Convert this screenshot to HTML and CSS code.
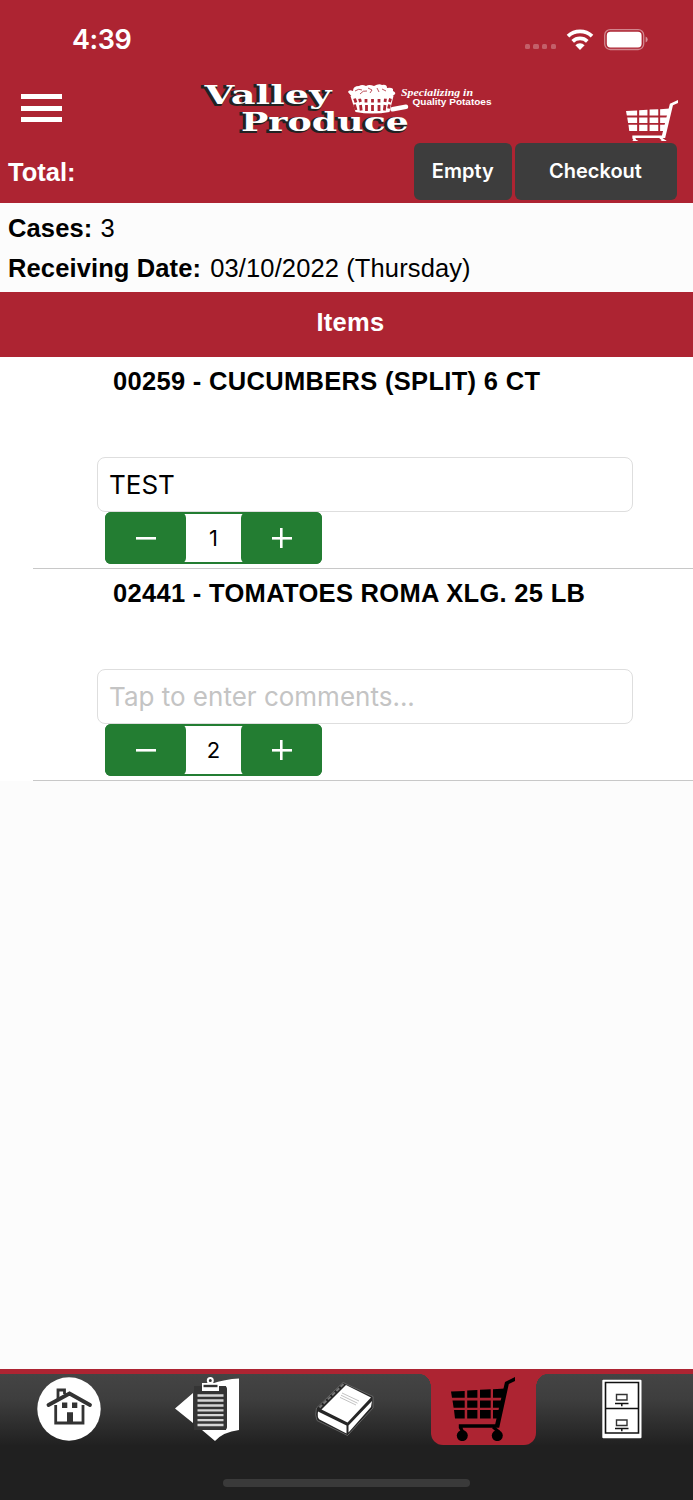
FILE: index.html
```html
<!DOCTYPE html>
<html lang="en">
<head>
  <meta charset="UTF-8" />
  <meta name="viewport" content="width=device-width, initial-scale=1.0"/>
  <title>Valley Produce - Cart</title>
  <link rel="stylesheet" href="styles.css">
</head>
<body>
  <!-- Shared cart icon -->
  <svg class="sprite" width="0" height="0">
    <symbol id="cart" viewBox="0 0 64 64" preserveAspectRatio="none">
      <path d="M0 14.6l13.7-.5v6.6H1zM16.2 13.6l10.2-.6v7.7H16.2zM29 12.8l10.7-.5v8.4H29zM42 12.2l12-.8-2 9.3H42z"/>
      <path d="M1.5 23.4h12.2v7.4H2.6zM16.2 23.4h10.2v7.4H16.2zM29 23.4h10.7v7.4H29zM42 23.4h10.5l-1.8 7.4H42z"/>
      <path d="M3 33h10.7v8.4H4zM16.2 33h10.2v8.4H16.2zM29 33h10.7v8.4H29zM42 33h9l-3 8.4H42z"/>
      <path d="M64 0v4l-6.2 3-9.6 43.8H11.500l2.200 5h-3.200L7.800 51v-3.800h36.400L54 5z"/>
      <path d="M42 50l6 5" stroke="currentColor" stroke-width="3"/>
      <circle cx="11.3" cy="58.6" r="5.5"/>
      <circle cx="46.3" cy="58.6" r="5.5"/>
    </symbol>
  </svg>

  <header class="header">
    <div class="status-bar">
      <span class="time">4:39</span>
      <div class="status-icons">
        <div class="signal"><i></i><i></i><i></i><i></i></div>
        <svg class="wifi" width="28" height="21" viewBox="0 0 28 21">
          <path d="M2 7.2a17.6 17.6 0 0 1 24 0M6.7 12.3a10.8 10.8 0 0 1 14.6 0" fill="none" stroke="#fff" stroke-width="3.8"/>
          <path d="M14 21l-4.6-4.8a6.6 6.6 0 0 1 9.2 0z" fill="#fff"/>
        </svg>
        <svg class="battery" width="44" height="22" viewBox="0 0 44 22">
          <rect x=".7" y=".7" width="39" height="19.8" rx="5.5" fill="none" stroke="#fff" stroke-opacity=".45" stroke-width="1.3"/>
          <rect x="2.8" y="2.8" width="34.8" height="15.6" rx="3.6" fill="#fff"/>
          <path d="M41.6 7.6q2.1 1 2.1 3t-2.1 3z" fill="#fff" fill-opacity=".5"/>
        </svg>
      </div>
    </div>

    <div class="top-bar">
      <button class="menu-btn" aria-label="Menu"><i></i><i></i><i></i></button>
      <svg class="logo" width="300" height="62" viewBox="195 78 300 62">
        <g class="logo-shadow">
          <text x="202.5" y="105" textLength="127" lengthAdjust="spacingAndGlyphs">Valley</text>
          <text x="239" y="132.2" textLength="168" lengthAdjust="spacingAndGlyphs">Produce</text>
        </g>
        <g class="logo-name">
          <text x="204.5" y="103.7" textLength="127" lengthAdjust="spacingAndGlyphs">Valley</text>
          <text x="241" y="131" textLength="168" lengthAdjust="spacingAndGlyphs">Produce</text>
        </g>
        <path d="M350.5 96h43l-4 16q-17 3-34 0z" fill="#fff"/>
        <path d="M354.5 98.5l1.5 4M359.5 98.5l1 3.5M366 99v3.5M372.5 99v3.5M379 99v3.5M385.5 98.5l-.5 3.5M390.5 98.5l-1 3.5M354.5 104.5l1.5 5.500M360.5 105l.7 5.5M366.5 105v6M372.5 105v6M379 105v6M385 105l-.7 5.5M389.5 104.5l-1 4" fill="none" stroke="#ad2432" stroke-width="2.8"/>
        <path d="M348 92q1-3 5-1 0-5 6-5 3-2 7 0 3-2 8 0 5-3 8-1 5-1 5 3 7-1 6 3 4 2 1 4l-4 3q-19 2-37 0z" fill="#fff"/>
        <path d="M355 91q4-3 7-1M360 94q3-4 7-3M368 88l4 2-2 3M377 88l2 4M382 89l4 2" fill="none" stroke="#ad2432" stroke-width=".8"/>
        <path d="M392.5 109.3l13.500-2.500" stroke="#fff" stroke-width="4.5" stroke-linecap="round"/>
        <text class="script" x="401" y="95.8" textLength="72" lengthAdjust="spacingAndGlyphs">Specializing in</text>
        <text class="tagline" x="412.5" y="105" textLength="79" lengthAdjust="spacingAndGlyphs">Quality Potatoes</text>
      </svg>
      <svg class="header-cart" width="52" height="41"><use href="#cart" width="52" height="48"/></svg>
    </div>

    <div class="total-bar">
      <span class="total">Total:</span>
      <button class="action-btn empty-btn">Empty</button>
      <button class="action-btn checkout-btn">Checkout</button>
    </div>
  </header>

  <section class="summary">
    <p><strong>Cases:</strong> <span class="cases">3</span></p>
    <p><strong>Receiving Date:</strong> <span class="date">03/10/2022 (Thursday)</span></p>
  </section>

  <h2 class="items-title">Items</h2>

  <main class="items">
    <div class="item">
      <h3>00259 - CUCUMBERS (SPLIT) 6 CT</h3>
      <input type="text" class="comment" value="TEST" placeholder="Tap to enter comments..." />
      <div class="stepper">
        <button aria-label="Decrease"><i class="minus"></i></button>
        <span>1</span>
        <button aria-label="Increase"><i class="plus"></i></button>
      </div>
    </div>
    <div class="item">
      <h3>02441 - TOMATOES ROMA XLG. 25 LB</h3>
      <input type="text" class="comment" placeholder="Tap to enter comments..." />
      <div class="stepper">
        <button aria-label="Decrease"><i class="minus"></i></button>
        <span>2</span>
        <button aria-label="Increase"><i class="plus"></i></button>
      </div>
    </div>
  </main>

  <nav class="tab-bar">
    <a class="tab">
      <svg width="64" height="64" viewBox="0 0 64 64">
        <circle cx="32" cy="32" r="31.7" fill="#fff"/>
        <path d="M21 22v-9h6.500v4M18.700 28v18h27.300V28" fill="none" stroke="#333" stroke-width="2.8"/>
        <path d="M11.500 28L32.500 16.500 53 28" fill="none" stroke="#333" stroke-width="3.8" stroke-linecap="round"/>
        <path d="M25 25.500h5.300v5.500H25zM35 25.500h5.300v5.500H35zM30 35.300h6v11h-6z" fill="#333"/>
      </svg>
    </a>
    <a class="tab">
      <svg width="64" height="64" viewBox="0 0 64 64">
        <path d="M0 31.5L18 16v30zM27 54h25q6-.5 12-1V1.500Q50 2 36 7l8 2h7v44H27l13 11q8-9 24-11" fill="#fff"/>
        <path d="M19 9h30q3 0 3 3v38q0 3-3 3H19z" fill="#353535"/>
        <path d="M27 6h17v8H27z" fill="#fff"/>
        <path d="M28.5 9h14" stroke="#333" stroke-width="2.4"/>
        <circle cx="35.3" cy="3.5" r="2.5" fill="#353535" stroke="#fff" stroke-width="2"/>
        <path d="M22.5 18.5h26M22.5 23.5h26M22.5 28.5h26M22.5 33.3h26M22.5 38.2h26M22.5 43.2h26M22.5 48h26" stroke="#d5d5d5" stroke-width="2.3"/>
      </svg>
    </a>
    <a class="tab">
      <svg width="64" height="64" viewBox="0 0 64 64">
        <path d="M30 5.5L3.5 31Q1.5 38 4 43.5L34.5 58.5 60 31V19.5z" fill="#262626" stroke="#777" stroke-width=".7"/>
        <path d="M33 8L8.5 32.5 34.5 45.5 58 20.5z" fill="#fff"/>
        <path d="M5 34.5L33.5 48.5v8L6.5 42.5q-2.500-2-1.500-8zM35.5 48.5L59 24l-1 6L35.5 55.5z" fill="#fff"/>
        <path d="M29 16l17 8M28 18.2l16.500 8M27 20.4l16 7.600" stroke="#bbb" stroke-width=".9"/>
        <path d="M30.5 7L6.5 30.5" stroke="#777" stroke-width="2" stroke-dasharray="4 2"/>
      </svg>
    </a>
    <a class="tab active">
      <svg width="64" height="64"><use href="#cart" width="64" height="64"/></svg>
    </a>
    <a class="tab">
      <svg class="cabinet" width="40" height="60" viewBox="0 0 40 60">
        <rect x=".3" y=".8" width="39.2" height="58.4" rx="1" fill="#fff"/>
        <path d="M3.5 3.5h33V54h-33zM3.5 29.500h33" fill="none" stroke="#111" stroke-width="1.6"/>
        <path d="M14.500 15.500h10.500v5.500H14.500zM14.500 41h10.500v5.500H14.500z" fill="none" stroke="#333" stroke-width="1.4"/>
        <path d="M13 24.500h13.500M19.800 24.500v2.800M13 49.500h13.500M19.800 49.500v2.800" stroke="#111" stroke-width="1.5"/>
      </svg>
    </a>
    <div class="home-indicator"></div>
  </nav>
</body>
</html>
```
FILE: styles.css
```css
* {
  box-sizing: border-box;
}

body {
  margin: 0;
  height: 1500px;
  display: flex;
  flex-direction: column;
  background: #fcfcfc;
  color: #000;
  font-family: "Liberation Sans", Arial, sans-serif;
  overflow: hidden;
}

button {
  border: none;
  padding: 0;
  font-family: Inter, sans-serif;
}

.sprite {
  position: absolute;
}

/* Header */
.header {
  height: 202.5px;
  flex-shrink: 0;
  background: #ad2432;
  color: #fff;
}

.status-bar {
  height: 78px;
  padding: 0 45px 0 72px;
  display: flex;
  justify-content: space-between;
}

.time {
  font: 600 27px/32px Inter, sans-serif;
  letter-spacing: -0.4px;
  margin-top: 24px;
}

.status-icons {
  display: flex;
  align-items: flex-start;
  padding-top: 29px;
}

.signal {
  display: flex;
  gap: 3.4px;
  margin: 15px 10px 0 0;
}

.signal i {
  width: 5.3px;
  height: 5.3px;
  border-radius: 1.5px;
  background: rgba(255, 255, 255, 0.27);
}

.battery {
  margin-left: 10px;
}

.top-bar {
  height: 64px;
  display: flex;
  padding-left: 21px;
}

.menu-btn {
  width: 41px;
  margin-top: 16px;
  background: none;
  display: flex;
  flex-direction: column;
  gap: 6.5px;
}

.menu-btn i {
  height: 5px;
  background: #fff;
}

.logo {
  margin-left: 133px;
}

.logo text {
  font-family: "DejaVu Serif", serif;
  font-weight: bold;
  font-size: 26px;
}

.logo-shadow {
  fill: #222;
  stroke: #222;
  stroke-width: 2px;
}

.logo-name {
  fill: #fff;
}

.logo .script {
  font: italic bold 10px "Liberation Serif", serif;
  fill: #fff;
}

.logo .tagline {
  font: bold 8.5px "Liberation Sans", sans-serif;
  fill: #fff;
}

.header-cart {
  margin: 22px 0 0 131px;
  fill: #fff;
  color: #fff;
}

.total-bar {
  height: 60.5px;
  display: flex;
  padding: 0 16.5px 0 8px;
}

.total {
  flex: 1;
  font-weight: bold;
  font-size: 25.5px;
  line-height: 61px;
}

.action-btn {
  height: 57px;
  margin-top: 0.5px;
  border-radius: 6px;
  background: #3d3d3d;
  color: #fff;
  font-weight: 600;
  font-size: 20px;
}

.empty-btn {
  width: 97.5px;
  margin-right: 3px;
}

.checkout-btn {
  width: 162px;
}

/* Order summary */
.summary {
  height: 89px;
  flex-shrink: 0;
  padding: 5px 8px;
  font-size: 25.5px;
}

.summary p {
  margin: 0;
  line-height: 40.5px;
}

.summary strong {
  letter-spacing: 0.12px;
}

.cases {
  margin-left: 1px;
}

.date {
  margin-left: 2px;
  letter-spacing: 0.12px;
}

.items-title {
  height: 65px;
  flex-shrink: 0;
  margin: 0;
  padding-left: 8px;
  background: #ad2432;
  color: #fff;
  font-size: 25.5px;
  letter-spacing: 0.3px;
  line-height: 60px;
  text-align: center;
}

/* Cart items */
.items {
  background: #fff;
}

.item {
  height: 212px;
  margin-left: 33px;
  padding: 7.4px 60px 0 64px;
  border-bottom: 1px solid #c8c8c8;
}

.item h3 {
  height: 93px;
  margin: 0;
  padding-left: 16px;
  font-size: 25.5px;
  letter-spacing: 0.31px;
  line-height: 34px;
  white-space: nowrap;
}

.comment {
  display: block;
  width: 536px;
  height: 55px;
  padding: 0 11px;
  border: 1px solid #dedede;
  border-radius: 8px;
  background: #fff;
  color: #000;
  font-family: Inter, sans-serif;
  font-size: 26px;
}

.comment::placeholder {
  color: #c4c4c4;
}

.stepper {
  width: 217px;
  height: 52px;
  margin-left: 8px;
  display: flex;
  border: 1px solid #237d32;
  border-width: 2px 1px;
  border-radius: 6px;
  background: #fff;
}

.stepper button {
  width: 81px;
  height: 52px;
  margin: -2px -1px;
  border-radius: 6px;
  background: #237d32;
  display: flex;
  align-items: center;
  justify-content: center;
}

.stepper span {
  flex: 1;
  font: 22px/49px Inter, sans-serif;
  text-align: center;
}

.minus, .plus {
  width: 20px;
  height: 20px;
  background: linear-gradient(#fff, #fff) center / 20px 2.6px no-repeat;
}

.plus {
  background: linear-gradient(#fff, #fff) center / 20px 2.6px no-repeat,
    linear-gradient(#fff, #fff) center / 2.6px 20px no-repeat;
}

/* Bottom tabs */
.tab-bar {
  position: relative;
  height: 131.5px;
  flex-shrink: 0;
  margin-top: auto;
  padding-right: 2px;
  display: grid;
  grid-template-columns: repeat(5, 1fr);
  justify-items: center;
  border-top: 5px solid #ad2432;
  background: linear-gradient(#444 0, #3e3e3e 25px, #202020 72px);
}

.tab {
  display: flex;
  justify-content: center;
  padding-top: 3.5px;
}

.tab.active {
  position: relative;
  width: 105px;
  height: 71.5px;
  padding-right: 1.5px;
  border-radius: 0 0 12px 12px;
  background: #ad2432;
}

.tab.active::before, .tab.active::after {
  content: "";
  position: absolute;
  top: 0;
  width: 11px;
  height: 13px;
}

.tab.active::before {
  right: 100%;
  background: radial-gradient(ellipse 11px 13px at 0 100%, transparent 97%, #ad2432 100%);
}

.tab.active::after {
  left: 100%;
  background: radial-gradient(ellipse 11px 13px at 100% 100%, transparent 97%, #ad2432 100%);
}

.cabinet {
  margin-top: 2px;
}

.home-indicator {
  position: absolute;
  left: 223px;
  bottom: 13px;
  width: 247px;
  height: 8px;
  border-radius: 4px;
  background: #3a3a3a;
}
```
